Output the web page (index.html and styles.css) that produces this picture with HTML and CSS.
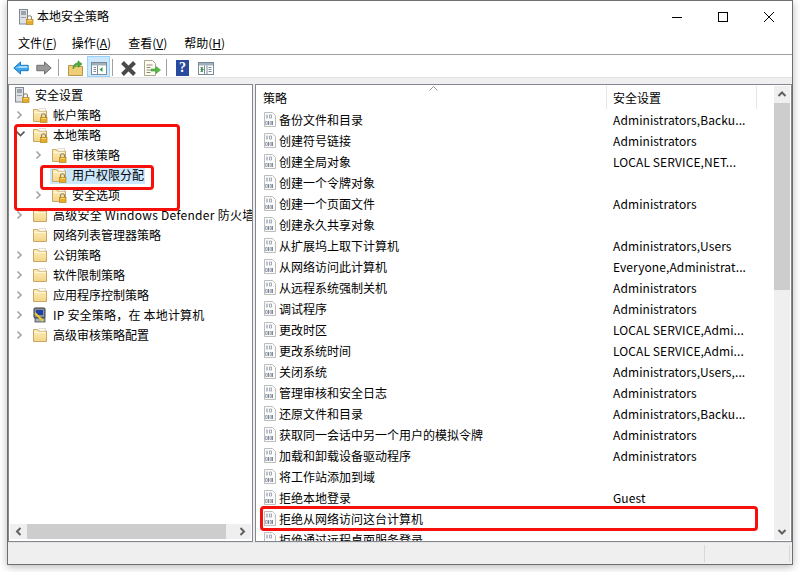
FILE: index.html
```html
<!DOCTYPE html>
<html lang="zh-CN">
<head>
<meta charset="utf-8">
<title>本地安全策略</title>
<link rel="stylesheet" href="styles.css">
</head>
<body>
<svg class="defs" width="0" height="0">
  <defs>
    <linearGradient id="fold" x1="0" y1="0" x2="0" y2="1">
      <stop offset="0" stop-color="#fdeeb9"/>
      <stop offset="1" stop-color="#f5d587"/>
    </linearGradient>
    <g id="folder">
      <path d="M1.500 2.500h4l1 1.500h8v10.500h-13z" fill="url(#fold)" stroke="#c6a765"/>
      <path d="M7 1.500h6.500V4H7z" fill="#fff" stroke="#d0c8b0" stroke-width=".6"/>
      <path d="M2.500 5.500h11" stroke="#fff6d8"/>
    </g>
    <g id="lock">
      <path d="M9.500 10.500V8.800a2 2 0 0 1 4 0v1.700" fill="none" stroke="#8d8468" stroke-width="1.100"/>
      <rect x="8.500" y="10.500" width="6.500" height="5" fill="#e6ad2b" stroke="#b5841c" stroke-width=".7"/>
      <path d="M9.500 11.500h4.500" stroke="#f7d777"/>
    </g>
    <g id="server">
      <rect x="1.500" y="0.500" width="8" height="14.500" fill="#dde1e6" stroke="#7f8894"/>
      <path d="M3 3h5M3 5h5" stroke="#5d6670"/>
      <rect x="3" y="8" width="5" height="1" fill="#9aa2ab"/>
    </g>
    <g id="policy">
      <path d="M1.500.5h8l3 3v11h-11z" fill="#fbfbfb" stroke="#bdbdbd"/>
      <path d="M3.500 2.500h1v4h-1zM9 9h1v4H9zM5 9h1v4H5z" fill="#7f8a9a"/>
      <path d="M6.500 3h2v3h-2zM2.500 9.500h1.800v3H2.500zM7 9.500h1.500v3H7z" fill="none" stroke="#8f98a6" stroke-width=".8"/>
    </g>
    <g id="chev-r"><path d="M1.500 1.500 5 5 1.500 8.500" fill="none" stroke="#a6a6a6" stroke-width="1.700"/></g>
    <g id="chev-d"><path d="M.500 1.500 4.500 5.500 8.500 1.500" fill="none" stroke="#595959" stroke-width="1.700"/></g>
    <g id="winpane">
      <rect x=".5" y=".5" width="15" height="12" fill="#fff" stroke="#7b8a96"/>
      <rect x="1" y="1" width="14" height="2.500" fill="#9fb0bc"/>
      <path d="M6.500 3.500v9" stroke="#7b8a96"/>
      <path d="M2.500 5.500h2.500M2.500 7.500h2.500M2.500 9.500h2.500" stroke="#7b8a96"/>
    </g>
  </defs>
</svg>

<div class="window">
  <header class="titlebar">
    <svg class="ico16" viewBox="0 0 16 16"><use href="#server"/><use href="#lock"/></svg>
    <span class="title">本地安全策略</span>
    <div class="caption">
      <svg width="12" height="12" viewBox="0 0 12 12"><path d="M1 6.500h10" stroke="#000"/></svg>
      <svg width="12" height="12" viewBox="0 0 12 12"><rect x="1.500" y="1.500" width="9" height="9" fill="none" stroke="#000"/></svg>
      <svg width="12" height="12" viewBox="0 0 12 12"><path d="M1 1l10 10M11 1 1 11" stroke="#000"/></svg>
    </div>
  </header>
  <nav class="menubar">
    <span>文件(<u>F</u>)</span><span>操作(<u>A</u>)</span><span>查看(<u>V</u>)</span><span>帮助(<u>H</u>)</span>
  </nav>
  <div class="toolbar">
    <svg class="tb" width="16" height="14" viewBox="0 0 16 14"><path d="M7.500 1 .800 7l6.700 6V9.700h7.700V4.300H7.500z" fill="#3ea6ec" stroke="#1c78c4"/><path d="M2.500 7h12V5H7z" fill="#a5dcfb"/></svg>
    <svg class="tb tb-fwd" width="16" height="14" viewBox="0 0 16 14"><path d="M8.500 1l6.700 6-6.700 6V9.700H.8V4.300h7.700z" fill="#9a9a9a" stroke="#6e6e6e"/></svg>
    <i class="sep sep-a"></i>
    <svg class="tb tb-up" width="15" height="16" viewBox="0 0 15 16"><path d="M.5 5.500h5l1 1h8v9H.5z" fill="#efce78" stroke="#b8954a"/><path d="M5 9c0-4 2-6 5-6V.8L14 4l-4 3.200V5C8 5 6.500 6.500 5 9z" fill="#4fae3c" stroke="#2f8a2a" stroke-width=".6"/></svg>
    <span class="tb-active"><svg class="tb" width="16" height="13" viewBox="0 0 16 13"><use href="#winpane"/><path d="M11.500 5v5l-3-2.500z" fill="#2e9e3e"/></svg></span>
    <i class="sep"></i>
    <svg class="tb tb-x" width="17" height="15" viewBox="0 0 17 15"><path d="M2.500 1.500 14.500 13.500M14.500 1.500 2.500 13.500" stroke="#4a4a4a" stroke-width="4"/></svg>
    <svg class="tb tb-exp" width="17" height="16" viewBox="0 0 17 16"><path d="M.5.500h8l3 3v12h-11z" fill="#fffdf2" stroke="#a9a58f"/><path d="M2.500 5h6M2.500 7.500h4M2.500 10h4M2.500 12.500h4" stroke="#8c8c7c"/><path d="M7 9h5V6.500l4.500 3.500-4.500 3.500V11H7z" fill="#58bb47" stroke="#3a9a33" stroke-width=".6"/></svg>
    <i class="sep sep-c"></i>
    <span class="help">?</span>
    <svg class="tb tb-mmc" width="16" height="13" viewBox="0 0 16 13"><use href="#winpane"/><path d="M3 5v5l3-2.500z" fill="#2e9e3e"/><path d="M9 3.500v9" stroke="#7b8a96"/><path d="M10.500 5.500h3M10.500 7.500h3M10.500 9.500h3" stroke="#7b8a96"/></svg>
  </div>
  <div class="band"></div>
  <main class="panes">
    <section class="pane tree-pane">
      <div class="tree">
        <div class="node lvl0"><svg class="ico16" viewBox="0 0 16 16"><use href="#server"/><use href="#lock"/></svg><span>安全设置</span></div>
        <div class="node lvl1"><svg class="chev" viewBox="0 0 9 10"><use href="#chev-r"/></svg><svg class="ico16" viewBox="0 0 16 16"><use href="#folder"/><use href="#lock"/></svg><span>帐户策略</span></div>
        <div class="node lvl1"><svg class="chev" viewBox="0 0 9 10"><use href="#chev-d"/></svg><svg class="ico16" viewBox="0 0 16 16"><use href="#folder"/><use href="#lock"/></svg><span>本地策略</span></div>
        <div class="node lvl2"><svg class="chev" viewBox="0 0 9 10"><use href="#chev-r"/></svg><svg class="ico16" viewBox="0 0 16 16"><use href="#folder"/><use href="#lock"/></svg><span>审核策略</span></div>
        <div class="node lvl2"><svg class="chev" viewBox="0 0 9 10"></svg><span class="selected"><svg class="ico16" viewBox="0 0 16 16"><use href="#folder"/><use href="#lock"/></svg><span>用户权限分配</span></span></div>
        <div class="node lvl2"><svg class="chev" viewBox="0 0 9 10"><use href="#chev-r"/></svg><svg class="ico16" viewBox="0 0 16 16"><use href="#folder"/><use href="#lock"/></svg><span>安全选项</span></div>
        <div class="node lvl1"><svg class="chev" viewBox="0 0 9 10"><use href="#chev-r"/></svg><svg class="ico16" viewBox="0 0 16 16"><use href="#folder"/></svg><span class="spaced-wide">高级安全 Windows Defender 防火墙</span></div>
        <div class="node lvl1"><svg class="chev" viewBox="0 0 9 10"></svg><svg class="ico16" viewBox="0 0 16 16"><use href="#folder"/></svg><span>网络列表管理器策略</span></div>
        <div class="node lvl1"><svg class="chev" viewBox="0 0 9 10"><use href="#chev-r"/></svg><svg class="ico16" viewBox="0 0 16 16"><use href="#folder"/></svg><span>公钥策略</span></div>
        <div class="node lvl1"><svg class="chev" viewBox="0 0 9 10"><use href="#chev-r"/></svg><svg class="ico16" viewBox="0 0 16 16"><use href="#folder"/></svg><span>软件限制策略</span></div>
        <div class="node lvl1"><svg class="chev" viewBox="0 0 9 10"><use href="#chev-r"/></svg><svg class="ico16" viewBox="0 0 16 16"><use href="#folder"/></svg><span>应用程序控制策略</span></div>
        <div class="node lvl1"><svg class="chev" viewBox="0 0 9 10"><use href="#chev-r"/></svg><svg class="ico16" viewBox="0 0 16 16"><rect x="2" y="1" width="11" height="10" rx="1" fill="#8a8f96" stroke="#33383e"/><rect x="4" y="3" width="7" height="5" fill="#1f3fa8"/><rect x="3" y="11" width="10" height="4" fill="#a8adb3" stroke="#33383e" stroke-width=".7"/><path d="M3 6l8 8" stroke="#f0d020" stroke-width="1.800"/></svg><span class="spaced">IP 安全策略，在 本地计算机</span></div>
        <div class="node lvl1"><svg class="chev" viewBox="0 0 9 10"><use href="#chev-r"/></svg><svg class="ico16" viewBox="0 0 16 16"><use href="#folder"/></svg><span>高级审核策略配置</span></div>
      </div>
      <div class="hscroll">
        <svg class="sb-btn" viewBox="0 0 17 15"><path d="M10.500 4 7 7.500l3.500 3.500" fill="none" stroke="#606060" stroke-width="2"/></svg>
        <div class="hthumb"></div>
        <svg class="sb-btn" viewBox="0 0 17 15"><path d="M6.500 4 10 7.500 6.500 11" fill="none" stroke="#606060" stroke-width="2"/></svg>
      </div>
    </section>
    <section class="pane list-pane">
      <div class="list">
        <div class="head">
          <div class="head-name">策略<svg class="sort" width="9" height="5" viewBox="0 0 9 5"><path d="M.5 4.500 4.500.5l4 4" fill="none" stroke="#9a9a9a"/></svg></div>
          <div class="head-val">安全设置</div>
          <div class="head-rest"></div>
        </div>
        <div class="row"><svg class="pol" viewBox="0 0 14 15"><use href="#policy"/></svg><span class="name">备份文件和目录</span><span class="val">Administrators,Backu...</span></div>
        <div class="row"><svg class="pol" viewBox="0 0 14 15"><use href="#policy"/></svg><span class="name">创建符号链接</span><span class="val">Administrators</span></div>
        <div class="row"><svg class="pol" viewBox="0 0 14 15"><use href="#policy"/></svg><span class="name">创建全局对象</span><span class="val">LOCAL SERVICE,NET...</span></div>
        <div class="row"><svg class="pol" viewBox="0 0 14 15"><use href="#policy"/></svg><span class="name">创建一个令牌对象</span><span class="val"></span></div>
        <div class="row"><svg class="pol" viewBox="0 0 14 15"><use href="#policy"/></svg><span class="name">创建一个页面文件</span><span class="val">Administrators</span></div>
        <div class="row"><svg class="pol" viewBox="0 0 14 15"><use href="#policy"/></svg><span class="name">创建永久共享对象</span><span class="val"></span></div>
        <div class="row"><svg class="pol" viewBox="0 0 14 15"><use href="#policy"/></svg><span class="name">从扩展坞上取下计算机</span><span class="val">Administrators,Users</span></div>
        <div class="row"><svg class="pol" viewBox="0 0 14 15"><use href="#policy"/></svg><span class="name">从网络访问此计算机</span><span class="val">Everyone,Administrat...</span></div>
        <div class="row"><svg class="pol" viewBox="0 0 14 15"><use href="#policy"/></svg><span class="name">从远程系统强制关机</span><span class="val">Administrators</span></div>
        <div class="row"><svg class="pol" viewBox="0 0 14 15"><use href="#policy"/></svg><span class="name">调试程序</span><span class="val">Administrators</span></div>
        <div class="row"><svg class="pol" viewBox="0 0 14 15"><use href="#policy"/></svg><span class="name">更改时区</span><span class="val">LOCAL SERVICE,Admi...</span></div>
        <div class="row"><svg class="pol" viewBox="0 0 14 15"><use href="#policy"/></svg><span class="name">更改系统时间</span><span class="val">LOCAL SERVICE,Admi...</span></div>
        <div class="row"><svg class="pol" viewBox="0 0 14 15"><use href="#policy"/></svg><span class="name">关闭系统</span><span class="val">Administrators,Users,...</span></div>
        <div class="row"><svg class="pol" viewBox="0 0 14 15"><use href="#policy"/></svg><span class="name">管理审核和安全日志</span><span class="val">Administrators</span></div>
        <div class="row"><svg class="pol" viewBox="0 0 14 15"><use href="#policy"/></svg><span class="name">还原文件和目录</span><span class="val">Administrators,Backu...</span></div>
        <div class="row"><svg class="pol" viewBox="0 0 14 15"><use href="#policy"/></svg><span class="name">获取同一会话中另一个用户的模拟令牌</span><span class="val">Administrators</span></div>
        <div class="row"><svg class="pol" viewBox="0 0 14 15"><use href="#policy"/></svg><span class="name">加载和卸载设备驱动程序</span><span class="val">Administrators</span></div>
        <div class="row"><svg class="pol" viewBox="0 0 14 15"><use href="#policy"/></svg><span class="name">将工作站添加到域</span><span class="val"></span></div>
        <div class="row"><svg class="pol" viewBox="0 0 14 15"><use href="#policy"/></svg><span class="name">拒绝本地登录</span><span class="val">Guest</span></div>
        <div class="row"><svg class="pol" viewBox="0 0 14 15"><use href="#policy"/></svg><span class="name">拒绝从网络访问这台计算机</span><span class="val"></span></div>
        <div class="row"><svg class="pol" viewBox="0 0 14 15"><use href="#policy"/></svg><span class="name">拒绝通过远程桌面服务登录</span><span class="val"></span></div>
      </div>
      <div class="vscroll">
        <svg class="sb-btn-v" viewBox="0 0 15 17"><path d="M4 10 7.500 6.500 11 10" fill="none" stroke="#606060" stroke-width="2"/></svg>
        <div class="vthumb"></div>
        <div class="vtrack"></div>
        <svg class="sb-btn-v" viewBox="0 0 15 17"><path d="M4 7 7.500 10.500 11 7" fill="none" stroke="#606060" stroke-width="2"/></svg>
      </div>
    </section>
  </main>
  <footer class="status"><i class="st st-a"></i><i class="st st-b"></i></footer>
</div>

<div class="mark mark-local"></div>
<div class="mark mark-rights"></div>
<div class="mark mark-row"></div>
</body>
</html>
```
FILE: styles.css
```css
* { box-sizing: border-box; }
html, body { margin: 0; padding: 0; height: 572px; overflow: hidden; background: #fff; }
body { font: 12px/16px "Noto Sans CJK SC", "Open Sans", sans-serif; color: #000; position: relative; }
.defs { position: absolute; }
svg { display: block; flex: none; }

.window {
  margin-left: 7px; width: 786px; height: 565px;
  border: 1px solid #6f6f6f; background: #fff;
  display: flex; flex-direction: column;
  box-shadow: 0 2px 8px rgba(0,0,0,.28);
}
.titlebar { height: 31px; display: flex; align-items: center; padding-left: 10px; flex: none; }
.ico16 { width: 16px; height: 16px; }
.title { margin-left: 3px; margin-bottom: 2px; }
.caption { margin-left: auto; display: flex; gap: 34px; padding-right: 17px; }

.menubar { height: 23px; flex: none; display: flex; padding-left: 10px; gap: 17px; align-items: center; border-bottom: 1px solid #a0a0a0; }
.menubar span { display: block; }
.menubar span:first-child { margin-right: -2px; }

.toolbar { height: 23px; flex: none; display: flex; align-items: center; padding-left: 5px; border-bottom: 1px solid #e3e3e3; }
.tb { margin-top: 4px; }
.tb-fwd { margin-left: 7px; }
.sep { width: 1px; height: 17px; background: #a0a0a0; margin-left: 2px; margin-top: 3px; }
.sep-a { margin-left: 6px; }
.sep-c { margin-left: 5px; }
.tb-up { margin-left: 9px; }
.tb-active { width: 23px; height: 21px; margin-left: 4px; background: #cce8ff; border: 1px solid #99d1ff; display: flex; align-items: center; justify-content: center; }
.tb-x { margin-left: 7px; }
.tb-exp { margin-left: 7px; }
.help { width: 13px; height: 16px; margin-left: 9px; margin-top: 4px; background: #2a4a9e; color: #fff; font: bold 14px/16px "Liberation Serif", serif; text-align: center; }
.tb-mmc { margin-left: 9px; }

.band { height: 6px; flex: none; background: #efefef; }
.panes { height: 458px; flex: none; display: flex; gap: 2px; background: #efefef; }
.pane { border: 1px solid #828790; background: #fff; display: flex; height: 458px; overflow: hidden; }

.tree-pane { width: 245px; flex-direction: column; }
.tree { flex: 1; overflow: hidden; }
.node { height: 20px; display: flex; align-items: center; white-space: nowrap; }
.lvl0 { padding-left: 5px; }
.lvl0 span { margin-left: 3px; }
.lvl1 { padding-left: 7px; }
.lvl2 { padding-left: 26px; }
.chev { width: 9px; height: 10px; margin-right: 7px; }
.node > .ico16 + span, .selected > .ico16 + span { margin-left: 5px; }
.selected { display: flex; align-items: center; height: 18px; background: #cce8ff; margin-left: -1px; padding-left: 1px; padding-right: 1px; }
.spaced { letter-spacing: .2px; }
.spaced-wide { letter-spacing: .28px; }

.hscroll { height: 15px; margin: 0 1px 2px; display: flex; background: #efefef; flex: none; }
.sb-btn { width: 17px; height: 15px; }
.hthumb { width: 199px; background: #cdcdcd; }
.hscroll .sb-btn:last-child { margin-left: auto; }

.list-pane { flex: 1; }
.list { flex: 1; min-width: 0; overflow: hidden; }
.head { height: 24px; display: flex; }
.head > div { display: flex; align-items: center; border-right: 1px solid #e5e5e5; margin: 1px 0 0; position: relative; }
.head-name { width: 351px; padding-left: 7px; }
.head-val { width: 150px; padding-left: 6px; }
.head-rest { flex: 1; border-right: 0 !important; }
.sort { position: absolute; left: 173px; top: 0; }
.row { height: 21px; display: flex; align-items: center; padding-left: 7px; white-space: nowrap; }
.pol { width: 14px; height: 15px; }
.name { margin-left: 2px; width: 334px; }
.val { letter-spacing: .1px; }

.vscroll { width: 16px; margin: 1px 1px 1px 0; background: #efefef; display: flex; flex-direction: column; flex: none; }
.sb-btn-v { width: 16px; height: 17px; }
.vthumb { height: 187px; background: #cdcdcd; }
.vtrack { flex: 1; }

.status { flex: 1; background: #efefef; position: relative; border-top: 1px solid #e3e3e3; }
.st { position: absolute; top: 2px; bottom: 2px; width: 1px; background: #d8d8d8; }
.st-a { left: 696px; }
.st-b { left: 781px; }

.mark { position: absolute; border: 3px solid #f6100c; border-radius: 4px; }
.mark-local { left: 14px; top: 124px; width: 166px; height: 87px; }
.mark-rights { left: 40px; top: 165px; width: 114px; height: 25px; }
.mark-row { left: 260px; top: 506px; width: 498px; height: 25px; }
```
